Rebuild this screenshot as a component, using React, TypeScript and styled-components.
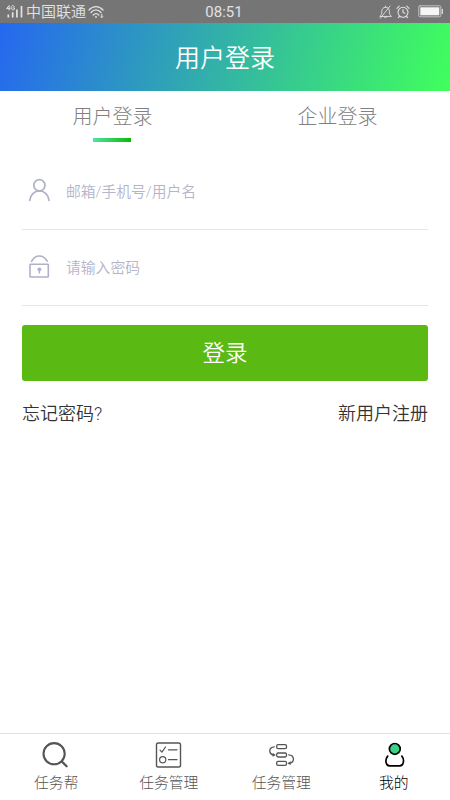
import React, { useState } from 'react';
import styled, { createGlobalStyle } from 'styled-components';

const GlobalStyle = createGlobalStyle`
  * {
    box-sizing: border-box;
  }
  body {
    margin: 0;
    background: #fff;
    font-family: Roboto, 'Noto Sans CJK SC', sans-serif;
    font-weight: 350;
  }
  button, input {
    font-family: inherit;
    font-weight: inherit;
    border: none;
    padding: 0;
    background: none;
    outline: none;
  }
  svg {
    display: block;
    fill: none;
    stroke: currentColor;
    stroke-linecap: round;
    stroke-linejoin: round;
  }
`;

const Screen = styled.div`
  width: 100%;
  height: 100vh;
  display: flex;
  flex-direction: column;
  overflow: hidden;
`;

const StatusBar = styled.div`
  display: grid;
  grid-template-columns: 1fr auto 1fr;
  align-items: center;
  height: 22.5px;
  flex-shrink: 0;
  padding: 0 6px;
  background: #757575;
  color: #e2e2e2;
`;

const StatusGroup = styled.div<{ $end?: boolean }>`
  display: flex;
  align-items: center;
  justify-content: ${({ $end }) => ($end ? 'flex-end' : 'flex-start')};
`;

const Carrier = styled.span`
  margin: 0 2px 0 3px;
  padding-top: 1px;
  font-size: 15px;
  line-height: 21px;
`;

const Clock = styled.span`
  font-size: 15px;
  font-weight: 400;
  line-height: 21px;
  padding: 2px 2px 0 0;
`;

const Header = styled.header`
  display: flex;
  align-items: center;
  justify-content: center;
  height: 68.5px;
  flex-shrink: 0;
  padding-bottom: 1px;
  background: linear-gradient(105deg, #2568f0 0%, #40ff5c 100%);
  color: #fff;
  font-size: 25px;
`;

const Tabs = styled.div`
  display: flex;
  height: 62.5px;
  flex-shrink: 0;
`;

const Tab = styled.button`
  flex: 1;
  display: flex;
  flex-direction: column;
  align-items: center;
  padding-top: 11.5px;
  color: #808080;
  font-size: 20px;
  font-weight: 300;
  line-height: 29px;
`;

const TabLine = styled.span`
  width: 38px;
  height: 4px;
  margin-top: 6px;
  margin-right: 1px;
  background: linear-gradient(90deg, #50e3a4, #09bb07);
`;

const Form = styled.div`
  flex: 1;
  padding: 0 22px;
`;

const Field = styled.label`
  display: flex;
  align-items: center;
  height: 76px;
  padding: 0 0 2px 6px;
  border-bottom: 1px solid #e6e6e9;
  color: #afb1c6;
`;

const FieldInput = styled.input`
  flex: 1;
  margin-left: 15px;
  padding-top: 3px;
  font-size: 14.8px;
  color: #333;
  &::placeholder {
    color: #b4b4ca;
    opacity: 1;
  }
`;

const LoginButton = styled.button`
  display: block;
  width: 100%;
  height: 56px;
  margin-top: 19.5px;
  padding-bottom: 4px;
  border-radius: 3px;
  background: #5ab912;
  color: #fff;
  font-size: 22.5px;
`;

const Links = styled.div`
  display: flex;
  justify-content: space-between;
  margin-top: 19.5px;
  color: #333;
  font-size: 18px;
  line-height: 26px;
`;

const TabBar = styled.nav`
  display: flex;
  height: 67px;
  flex-shrink: 0;
  border-top: 1px solid #e2e2e2;
`;

const TabBarItem = styled.button<{ $active?: boolean }>`
  flex: 1;
  display: flex;
  flex-direction: column;
  align-items: center;
  padding-top: 6px;
  color: ${({ $active }) => ($active ? '#000' : '#555')};
  font-size: 14.8px;
  font-weight: 300;
  line-height: 22px;
  svg {
    margin-bottom: 2px;
  }
`;

const SignalIcon = () => (
  <svg width="17" height="15" viewBox="0 0 17 15" strokeWidth="1.7">
    <path strokeWidth="1" d="M3.1 6V1.6L.6 4.6h3.3M8.4 2.4C7.5 1 5.1 1.4 5.1 3.7s2.4 2.8 3.3 1.6V3.9H7" />
    <path strokeLinecap="butt" d="M2.3 10.6v2.8M6.7 8.2v5.2M10.9 5.6v7.8M15.5 2v11.4" />
  </svg>
);

const WifiIcon = () => (
  <svg width="16" height="14" viewBox="0 0 16 14" strokeWidth="1.3">
    <path d="M1 5C5 .5 11 .5 15 5M3 7.5c3-3.4 7-3.4 10 0M5.2 10c1.7-1.9 3.9-1.9 5.6 0" />
    <circle cx="8" cy="12" r=".9" fill="currentColor" stroke="none" />
    <path strokeWidth="1" d="M13.8 9.2v3.3M12.8 11.7l1 1 1-1" />
  </svg>
);

const MuteIcon = () => (
  <svg width="13" height="14" viewBox="0 0 13 14" strokeWidth="0.9">
    <path d="M1 11.2c1.3-1 1.8-2.4 1.8-4.6 0-2.7 1.4-4.3 3.8-4.3s3.8 1.6 3.8 4.3c0 2.2.4 3.6 1.8 4.6zM5 11.4c.2 1.9 2.8 1.9 3 0M6.6 2.2V1M11 1 1.4 13.2" />
  </svg>
);

const AlarmIcon = () => (
  <svg width="14" height="14" viewBox="0 0 14 14" strokeWidth="1.1">
    <circle cx="7" cy="7.3" r="5" />
    <path d="M7 4.5v3l2 .7M1 3.3 3.2 1.2M13 3.3l-2.2-2.1M3.5 11.3l-1.2 1.4M10.5 11.3l1.2 1.4" />
  </svg>
);

const BatteryIcon = () => (
  <svg width="26" height="13" viewBox="0 0 26 13" strokeWidth="1.2">
    <rect x=".8" y=".8" width="22" height="11" rx="1.2" strokeWidth="1" stroke="#c4c4c4" />
    <rect x="2.3" y="2.3" width="19" height="8" fill="#f5f5f5" stroke="none" />
    <path d="M24.3 4.4v4" />
  </svg>
);

const StatusIcons = styled(StatusGroup)`
  svg + svg {
    margin-left: 4px;
  }
  svg:last-child {
    margin-left: 8px;
  }
`;

const UserIcon = () => (
  <svg width="23" height="24" viewBox="0 0 23 24" strokeWidth="1.7">
    <circle cx="11.4" cy="7.3" r="5.6" />
    <path d="M1.8 22.4c.4-5.5 4.6-9.5 9.6-9.5s9.2 4 9.6 9.5" />
  </svg>
);

const LockIcon = () => (
  <svg width="23" height="24" viewBox="0 0 23 24" strokeWidth="1.6">
    <path d="M3.6 7.4C5.5 3.7 8.2 2 11.4 2s5.9 1.7 7.8 5.2" />
    <rect x="2" y="10.2" width="18.3" height="12.8" rx=".6" />
    <circle cx="11.4" cy="15.3" r="1.9" fill="currentColor" stroke="none" />
    <path strokeWidth="1.4" d="M11.4 16v3" />
  </svg>
);

const SearchIcon = () => (
  <svg width="30" height="30" viewBox="0 0 30 30">
    <circle cx="13.1" cy="13.7" r="10.6" strokeWidth="2.1" />
    <path strokeWidth="2.3" d="m21 21.7 4.6 4.5" />
  </svg>
);

const TasksIcon = () => (
  <svg width="30" height="30" viewBox="0 0 30 30" strokeWidth="1.2">
    <rect x="2.5" y="3" width="24" height="24" rx="1.8" strokeWidth="1.4" />
    <path d="m6 10.2 1.9 2L11.5 7M14.5 9.8H23M14.5 19.7H23" />
    <circle cx="8.7" cy="19.8" r="3.1" />
  </svg>
);

const FlowIcon = () => (
  <svg width="30" height="30" viewBox="0 0 30 30" strokeWidth="1.3">
    <rect x="10.7" y="4.7" width="9.8" height="4" rx="1.4" />
    <rect x="10.7" y="13" width="9.8" height="4" rx="1.4" />
    <rect x="10.7" y="21.3" width="9.8" height="4" rx="1.4" />
    <path d="M8.3 6.8C2.4 7.2 2.2 14 8 15M22.7 14.8c6 .4 6.4 7.6 .4 8.5" />
    <path fill="currentColor" strokeWidth=".6" d="m7.3 13.6 2 1.5-2.3 1zM24.2 21.9l-2.3 1.4 2.3 1.2z" />
  </svg>
);

const MineIcon = () => (
  <svg width="30" height="30" viewBox="0 0 30 30" strokeWidth="1.7">
    <circle cx="15.8" cy="8.9" r="5.4" fill="#3cd184" />
    <path d="M8.7 16.1c-3 3.7-2 9.8 1.9 9.8h10.1c4 0 5-6.1 2.1-9.8" />
  </svg>
);

const tabs = ['用户登录', '企业登录'];

const navItems = [
  { label: '任务帮', Icon: SearchIcon },
  { label: '任务管理', Icon: TasksIcon },
  { label: '任务管理', Icon: FlowIcon },
  { label: '我的', Icon: MineIcon },
];

const App: React.FC = () => {
  const [tab, setTab] = useState(0);
  const [nav, setNav] = useState(3);

  return (
    <>
      <GlobalStyle />
      <Screen>
        <StatusBar>
          <StatusGroup>
            <SignalIcon />
            <Carrier>中国联通</Carrier>
            <WifiIcon />
          </StatusGroup>
          <Clock>08:51</Clock>
          <StatusIcons $end>
            <MuteIcon />
            <AlarmIcon />
            <BatteryIcon />
          </StatusIcons>
        </StatusBar>
        <Header>用户登录</Header>
        <Tabs>
          {tabs.map((label, i) => (
            <Tab key={label} onClick={() => setTab(i)}>
              {label}
              {tab === i && <TabLine />}
            </Tab>
          ))}
        </Tabs>
        <Form>
          <Field>
            <UserIcon />
            <FieldInput placeholder="邮箱/手机号/用户名" />
          </Field>
          <Field>
            <LockIcon />
            <FieldInput type="password" placeholder="请输入密码" />
          </Field>
          <LoginButton>登录</LoginButton>
          <Links>
            <span>忘记密码?</span>
            <span>新用户注册</span>
          </Links>
        </Form>
        <TabBar>
          {navItems.map(({ label, Icon }, i) => (
            <TabBarItem key={i} $active={nav === i} onClick={() => setNav(i)}>
              <Icon />
              {label}
            </TabBarItem>
          ))}
        </TabBar>
      </Screen>
    </>
  );
};

export default App;
